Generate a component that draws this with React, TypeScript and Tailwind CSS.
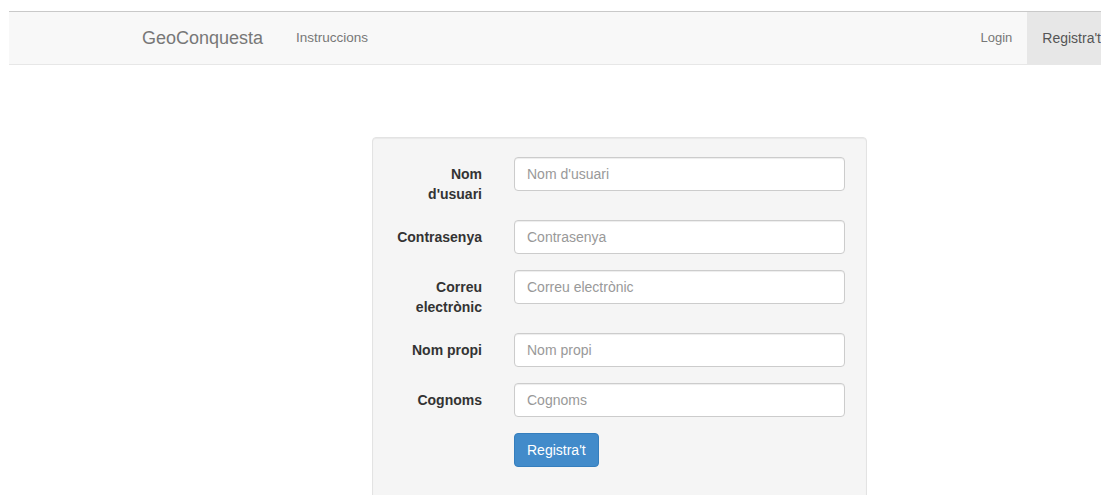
const FIELDS = [
  { label: "Nom d'usuari", placeholder: "Nom d'usuari", type: "text" },
  { label: "Contrasenya", placeholder: "Contrasenya", type: "password" },
  { label: "Correu electrònic", placeholder: "Correu electrònic", type: "email" },
  { label: "Nom propi", placeholder: "Nom propi", type: "text" },
  { label: "Cognoms", placeholder: "Cognoms", type: "text" },
];

function Navbar() {
  return (
    <nav className="flex h-[54px] w-[1102px] items-stretch justify-between border-t border-b border-t-[#c9c9c9] border-b-[#e7e7e7] bg-[#f8f8f8]">
      <div className="flex items-center pl-[133px]">
        <a className="text-[18px] leading-5 text-[#777]" href="#">
          GeoConquesta
        </a>
        <a className="ml-[33px] text-[13.5px] leading-5 text-[#777]" href="#">
          Instruccions
        </a>
      </div>
      <ul className="flex items-stretch">
        <li className="flex items-center px-[15px] text-[13px] text-[#777]">
          <a href="#">Login</a>
        </li>
        <li className="flex items-center bg-[#e7e7e7] pl-[15px] pr-[10px] text-[14px] text-[#555]">
          <a href="#">Registra't</a>
        </li>
      </ul>
    </nav>
  );
}

function SignupForm() {
  return (
    <form className="ml-[363px] mt-[72px] w-[495px] rounded border border-[#e3e3e3] bg-[#f5f5f5] p-[19px] pb-[34px] shadow-[inset_0_1px_1px_rgba(0,0,0,0.05)]">
      {FIELDS.map((field) => (
        <div key={field.label} className="mb-[16px] grid grid-cols-[90px_1fr] gap-x-[32px] last:mb-[15px]">
          <label className="ml-auto w-[86px] pt-[7px] text-right text-[14px] font-bold leading-5 text-[#333]">
            {field.label}
          </label>
          <input
            type={field.type}
            placeholder={field.placeholder}
            className="h-[34px] w-[331px] rounded border border-[#ccc] bg-white px-3 text-[14px] text-[#555] shadow-[inset_0_1px_1px_rgba(0,0,0,0.075)] outline-none placeholder:text-[#999]"
          />
        </div>
      ))}
      <div className="grid grid-cols-[90px_1fr] gap-x-[32px]">
        <div />
        <div>
          <button
            type="button"
            className="h-[34px] rounded border border-[#357ebd] bg-[#428bca] px-3 text-[14px] leading-5 text-white"
          >
            Registra't
          </button>
        </div>
      </div>
    </form>
  );
}

export default function App() {
  return (
    <div className="h-[495px] w-[1101px] overflow-hidden bg-white pl-[9px] pt-[11px] font-['Liberation_Sans',Arial,sans-serif]">
      <Navbar />
      <SignupForm />
    </div>
  );
}
